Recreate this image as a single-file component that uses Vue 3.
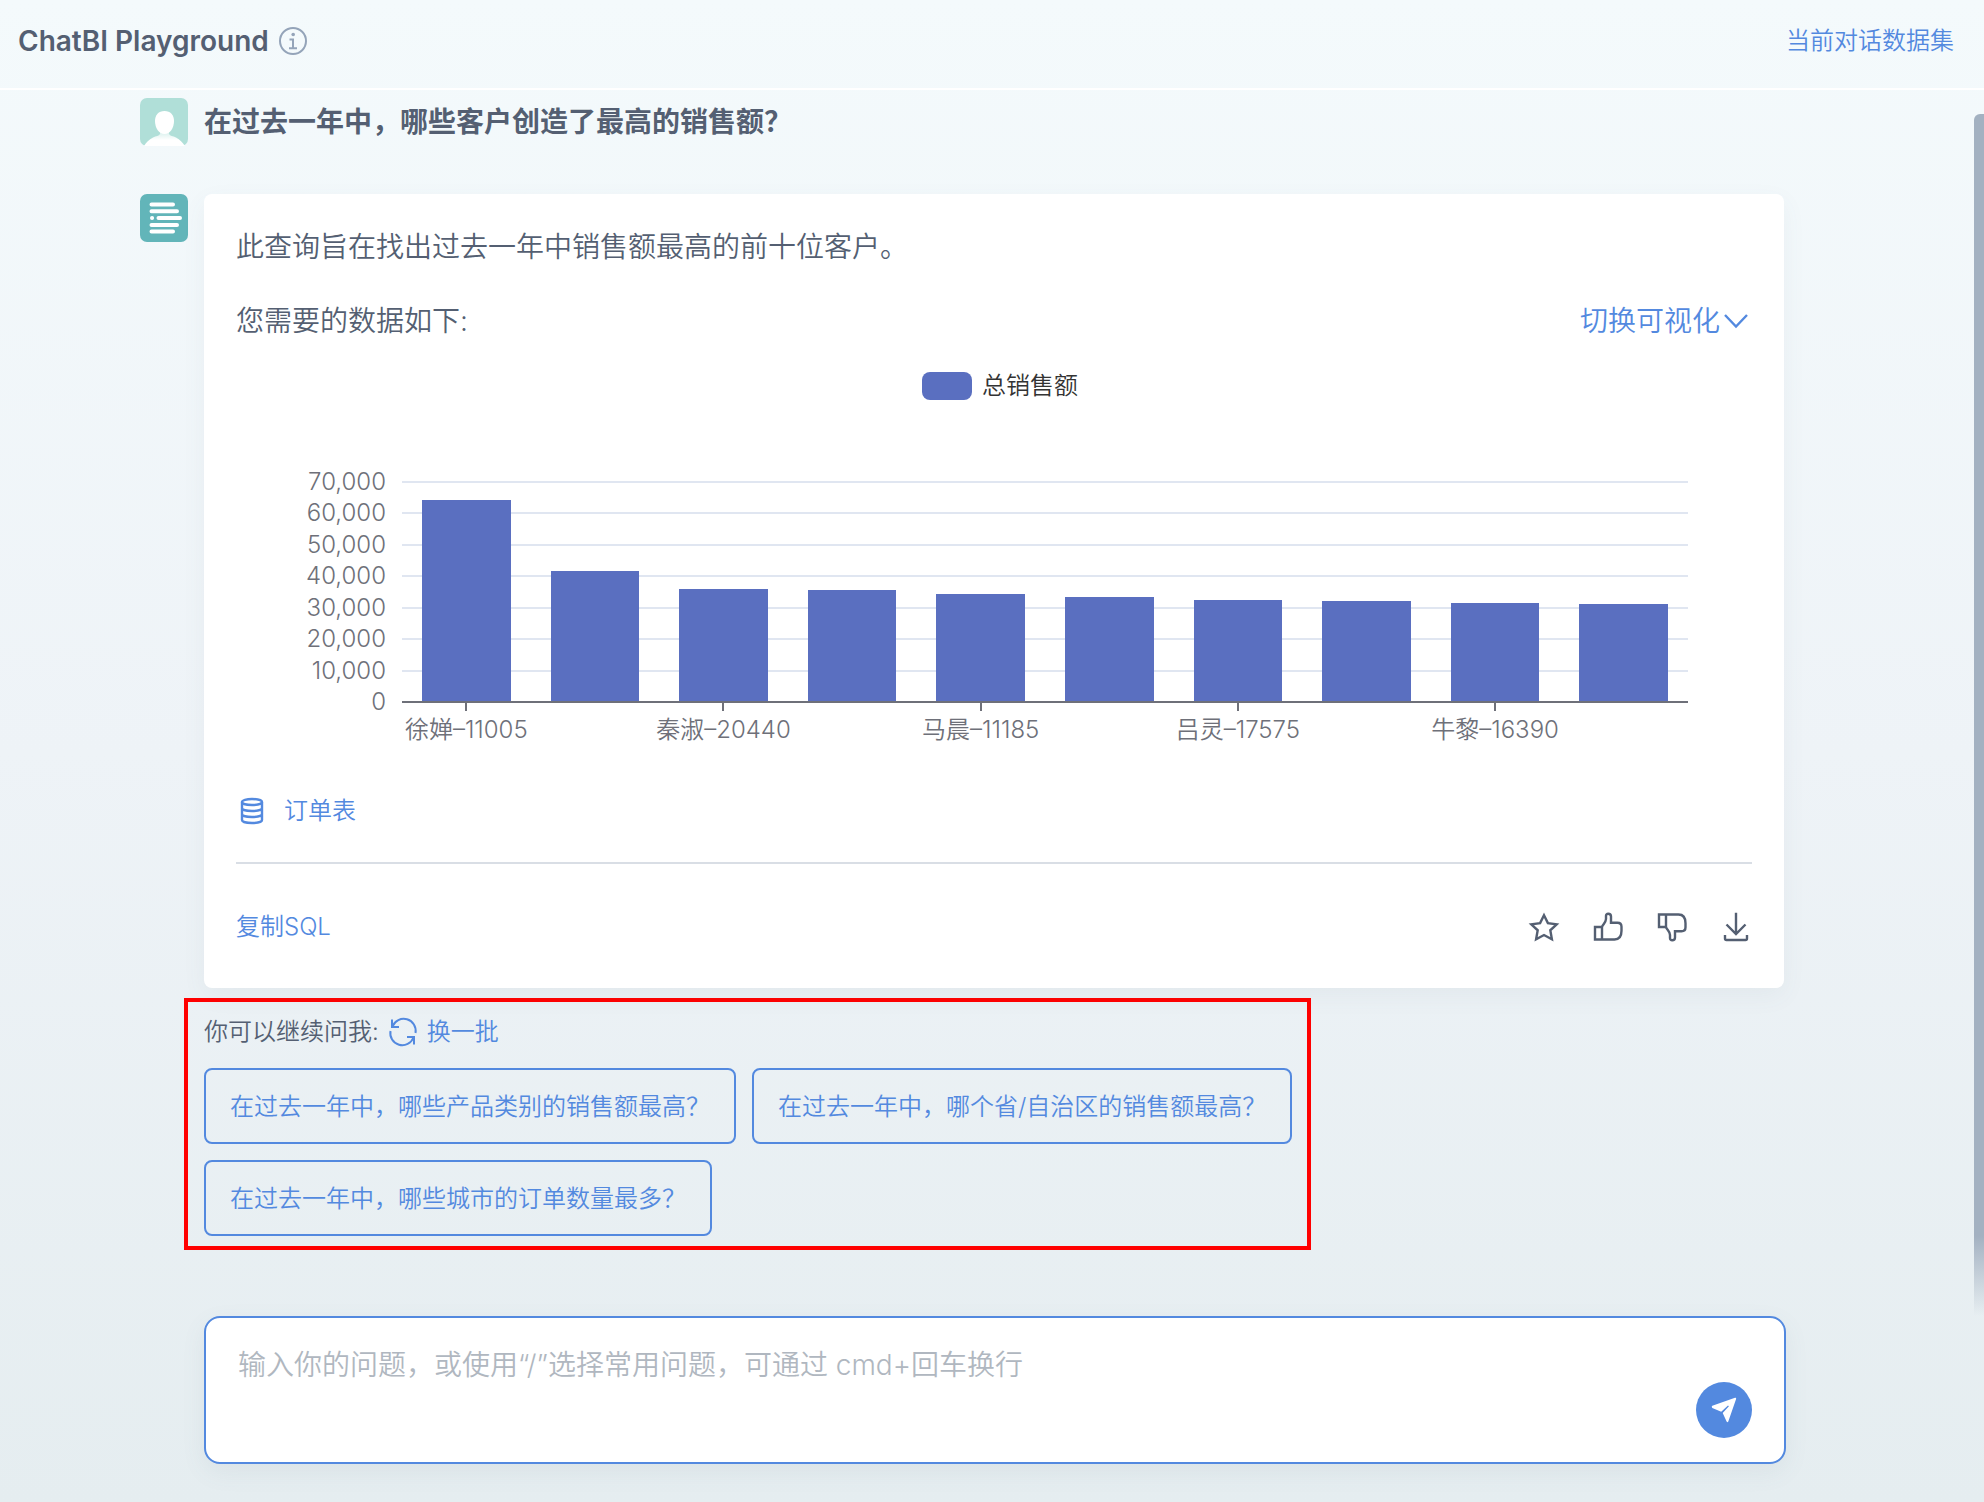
<script setup>
import { ref } from 'vue'

const question = ref('')
const axisMax = 70000
const axisTicks = ['70,000', '60,000', '50,000', '40,000', '30,000', '20,000', '10,000', '0']
const sales = [
  { name: '徐婵–11005', value: 64100 },
  { name: '', value: 41400 },
  { name: '秦淑–20440', value: 35700 },
  { name: '', value: 35200 },
  { name: '马晨–11185', value: 34000 },
  { name: '', value: 33100 },
  { name: '吕灵–17575', value: 32100 },
  { name: '', value: 31700 },
  { name: '牛黎–16390', value: 31100 },
  { name: '', value: 31000 },
]
const suggestions = [
  '在过去一年中，哪些产品类别的销售额最高？',
  '在过去一年中，哪个省/自治区的销售额最高？',
  '在过去一年中，哪些城市的订单数量最多？',
]
const barHeight = (value) => ({ height: (value / axisMax) * 100 + '%' })
</script>

<template>
  <div class="page" lang="zh-CN">
    <header class="header">
      <h1 class="title">ChatBI Playground</h1>
      <button class="icon-button info" type="button" aria-label="说明">
        <svg width="28" height="28" viewBox="0 0 28 28" fill="none" stroke="currentColor" stroke-width="2">
          <circle cx="14" cy="14" r="13" />
          <path d="M10.5 12.5H14V21M10 21.2h8" />
          <circle cx="14.2" cy="7.5" r="1.8" fill="currentColor" stroke="none" />
        </svg>
      </button>
      <a class="link dataset" href="#">当前对话数据集</a>
    </header>

    <main class="chat">
      <section class="message ask">
        <svg class="avatar" width="48" height="48" viewBox="0 0 48 48">
          <defs>
            <linearGradient id="shoulder" x1="0" y1="0" x2="0" y2="1">
              <stop offset="0" stop-color="#d3eeea" />
              <stop offset="0.6" stop-color="#fff" />
            </linearGradient>
          </defs>
          <rect width="48" height="48" rx="7" fill="#b0dfd8" />
          <path d="M20 33h9v3c1 2 4 2 7 3.500 4 2 6.500 5 9 8.500H4c2-3.500 5-6.500 9-8.500 3-1.500 6-1.500 7-3.500z" fill="url(#shoulder)" />
          <path d="M24.500 13c6 0 9.500 4 9.500 10 0 7-4 13-9.500 13S15 30 15 23c0-6 3.500-10 9.500-10z" fill="#fff" />
        </svg>
        <h2 class="question">在过去一年中，哪些客户创造了最高的销售额？</h2>
      </section>

      <section class="message">
        <svg class="avatar" width="48" height="48" viewBox="0 0 48 48">
          <rect width="48" height="48" rx="7" fill="#62b5b9" />
          <path d="M11.500 10.500H33M11.500 17.200H37M12 24h.1M18.500 24H40M11.500 31H37M11.500 37.500H33" stroke="#fff" stroke-width="4" stroke-linecap="round" />
        </svg>
        <article class="card">
          <p class="text">此查询旨在找出过去一年中销售额最高的前十位客户。</p>
          <div class="row data-row">
            <p class="text">您需要的数据如下:</p>
            <button class="link switch" type="button">
              切换可视化
              <svg width="32" height="32" viewBox="0 0 32 32" fill="none" stroke="currentColor" stroke-width="2.4">
                <path d="M5 10l11 11.500L27 10" />
              </svg>
            </button>
          </div>

          <figure class="chart">
            <figcaption class="legend"><span class="swatch"></span>总销售额</figcaption>
            <div class="chart-body">
              <ul class="y-axis">
                <li v-for="tick in axisTicks" :key="tick">{{ tick }}</li>
              </ul>
              <div class="plot-column">
                <div class="plot">
                  <div class="grid-lines">
                    <span v-for="tick in axisTicks" :key="tick" class="grid-line"></span>
                  </div>
                  <div v-for="(item, i) in sales" :key="i" class="band">
                    <div class="bar" :style="barHeight(item.value)"></div>
                  </div>
                </div>
                <div class="x-axis">
                  <div v-for="(item, i) in sales" :key="i" class="x-label" :class="{ ticked: item.name }">
                    {{ item.name }}
                  </div>
                </div>
              </div>
            </div>
          </figure>

          <a class="link source" href="#">
            <svg width="32" height="32" viewBox="0 0 32 32" fill="none" stroke="currentColor" stroke-width="2.400">
              <ellipse cx="16" cy="7" rx="10" ry="3" />
              <path d="M6 7v18c0 1.700 4.500 3 10 3s10-1.300 10-3V7M6 13c0 1.700 4.500 3 10 3s10-1.300 10-3M6 19c0 1.700 4.500 3 10 3s10-1.300 10-3" />
            </svg>
            订单表
          </a>
          <hr class="divider" />
          <div class="row">
            <button class="link" type="button">复制SQL</button>
            <div class="actions">
              <button class="icon-button" type="button" aria-label="收藏">
                <svg width="32" height="32" viewBox="0 0 32 32" fill="none" stroke="currentColor" stroke-width="2.400">
                  <path d="M16 4.200l3.900 7.900 8.800 1.200-6.400 6 1.600 8.900-7.900-4.200-7.900 4.200 1.600-8.900-6.400-6 8.800-1.200z" />
                </svg>
              </button>
              <button class="icon-button" type="button" aria-label="赞">
                <svg width="32" height="32" viewBox="0 0 32 32" fill="none" stroke="currentColor" stroke-width="2.400">
                  <path d="M10 16H3v12.500h7zM10 16c.5-2.500 3.800-4 4-8V5c0-1.500.8-2.200 2.200-2.200 1.800 0 2.800 1 2.800 2.700v6.300h6.500c2.500 0 4 1.500 4 4v4c0 6-2 8.700-7 8.700H10" />
                </svg>
              </button>
              <button class="icon-button" type="button" aria-label="踩">
                <svg width="32" height="32" viewBox="0 0 32 32" fill="none" stroke="currentColor" stroke-width="2.400">
                  <path transform="translate(0 32) scale(1 -1)" d="M10 16H3v12.500h7zM10 16c.5-2.500 3.800-4 4-8V5c0-1.500.8-2.200 2.200-2.200 1.800 0 2.800 1 2.800 2.700v6.300h6.500c2.500 0 4 1.500 4 4v4c0 6-2 8.700-7 8.700H10" />
                </svg>
              </button>
              <button class="icon-button" type="button" aria-label="下载">
                <svg width="32" height="32" viewBox="0 0 32 32" fill="none" stroke="currentColor" stroke-width="2.400">
                  <path d="M16 1.700V23M6.500 13.500L16 23l9.500-9.500M5 24v3.500q0 1.500 1.500 1.500h19q1.500 0 1.500-1.500V24" />
                </svg>
              </button>
            </div>
          </div>
        </article>
      </section>

      <section class="suggestions">
        <div class="suggest-head">
          <span>你可以继续问我:</span>
          <button class="link refresh" type="button">
            <svg width="32" height="32" viewBox="0 0 32 32" fill="none" stroke="currentColor" stroke-width="2">
              <path d="M5 3.500V11h7M5.500 10.500A12 12 0 0 1 28.500 17M27 28.500V21h-7M26.500 21.500A12 12 0 0 1 3.500 15" />
            </svg>
            换一批
          </button>
        </div>
        <div class="suggest-list">
          <button v-for="item in suggestions" :key="item" class="suggest" type="button">{{ item }}</button>
        </div>
      </section>
      <span class="scroll-thumb"></span>
    </main>

    <footer class="footer">
      <form class="composer" @submit.prevent>
        <textarea
          v-model="question"
          class="input"
          aria-label="输入你的问题"
          placeholder="输入你的问题，或使用“/”选择常用问题，可通过 cmd+回车换行"
        ></textarea>
        <button class="send" type="submit" aria-label="发送">
          <svg width="56" height="56" viewBox="0 0 56 56">
            <path d="M16.300 23.700L39 15.800q1.500-.3 1.100 1.200L32.300 39.500q-.7 1.300-1.700.1L26.700 31l6.200-6.700-.9-.9-6.800 6.300-8.900-3.800q-1.200-1.200 0-2.200z" fill="#fff" />
          </svg>
        </button>
      </form>
    </footer>
  </div>
</template>

<style>
body {
  margin: 0;
}
</style>

<style scoped>
.page {
  display: flex;
  flex-direction: column;
  box-sizing: border-box;
  min-height: 100vh;
  background: linear-gradient(#f4fafc, #eef3f7 50%, #e5edf0);
  color: #545f72;
  font-family: Inter, "Noto Sans CJK SC", sans-serif;
  font-size: 24px;
  font-weight: 350;
  line-height: 32px;
}
h1,
h2,
p,
ul,
figure {
  margin: 0;
  padding: 0;
}
button {
  padding: 0;
  border: 0;
  background: none;
  color: inherit;
  font: inherit;
  cursor: pointer;
}
svg {
  display: block;
  flex: none;
}
.link {
  color: #5389df;
  text-decoration: none;
}
.header {
  display: flex;
  align-items: center;
  gap: 10px;
  height: 82px;
  padding: 0 30px 6px 18px;
  border-bottom: 2px solid #fff;
}
.title {
  font-size: 28px;
  font-weight: 600;
  line-height: 40px;
}
.info {
  color: #94a4b9;
}
.dataset {
  margin-left: auto;
}
.chat {
  position: relative;
  flex: 1;
  padding: 8px 200px 66px 140px;
}
.message {
  display: flex;
  align-items: flex-start;
  gap: 16px;
}
.ask {
  margin-bottom: 48px;
}
.question {
  font-size: 28px;
  font-weight: 600;
  line-height: 48px;
}
.card {
  flex: 1;
  min-width: 0;
  padding: 33px 32px 45px;
  border-radius: 8px;
  background: #fff;
  box-shadow: 0 8px 24px rgba(84, 110, 122, 0.06);
}
.text {
  font-size: 28px;
  line-height: 40px;
}
.row {
  display: flex;
  align-items: center;
  justify-content: space-between;
}
.data-row {
  margin-top: 34px;
}
.switch {
  display: flex;
  align-items: center;
  font-size: 28px;
  line-height: 40px;
}
.chart {
  margin-top: 31px;
}
.legend {
  display: flex;
  align-items: center;
  justify-content: center;
  gap: 10px;
  height: 28px;
  padding-left: 12px;
  color: #333;
}
.swatch {
  width: 50px;
  height: 28px;
  border-radius: 8px;
  background: #5a6fc0;
}
.chart-body {
  display: flex;
  gap: 16px;
  margin-top: 81px;
  padding-right: 64px;
  color: #6e7079;
}
.y-axis {
  display: flex;
  flex-direction: column;
  justify-content: space-between;
  width: 150px;
  height: 248px;
  margin: -13px 0;
  line-height: 28px;
  list-style: none;
  text-align: right;
}
.plot-column {
  flex: 1;
}
.plot {
  position: relative;
  display: flex;
  align-items: flex-end;
  height: 220px;
  border-bottom: 2px solid #6e7079;
}
.grid-lines {
  position: absolute;
  inset: 0 0 -2px;
  display: flex;
  flex-direction: column;
  justify-content: space-between;
}
.grid-line {
  height: 2px;
  background: #e0e6f1;
}
.grid-line:last-child {
  background: #6e7079;
}
.band {
  position: relative;
  display: flex;
  flex: 1;
  align-items: flex-end;
  height: 100%;
  padding: 0 20px;
}
.bar {
  flex: 1;
  background: #5a6fc0;
}
.x-axis {
  display: flex;
}
.x-label {
  display: flex;
  flex: 1 1 0;
  flex-direction: column;
  align-items: center;
  width: 0;
  white-space: nowrap;
}
.ticked::before {
  width: 2px;
  height: 8px;
  margin-bottom: 3px;
  background: #6e7079;
  content: "";
}
.source {
  display: flex;
  align-items: center;
  gap: 16px;
  width: fit-content;
  margin-top: 49px;
}
.divider {
  height: 2px;
  margin: 35px 0 47px;
  border: 0;
  background: #d9dee5;
}
.actions {
  display: flex;
  gap: 32px;
}
.suggestions {
  box-sizing: border-box;
  max-width: 1127px;
  margin: 10px 0 0 44px;
  padding: 14px 14px 10px 16px;
  border: 4px solid #f00;
}
.suggest-head {
  display: flex;
  gap: 8px;
}
.refresh {
  display: flex;
  align-items: center;
  gap: 8px;
}
.suggest-list {
  display: flex;
  flex-wrap: wrap;
  gap: 16px;
  margin-top: 20px;
}
.suggest {
  height: 76px;
  padding: 1px 24px 0;
  border: 2px solid #5389df;
  border-radius: 8px;
  color: #5389df;
}
.scroll-thumb {
  position: absolute;
  top: 24px;
  right: 0;
  bottom: 0;
  width: 10px;
  border-radius: 6px 0 0 0;
  background: linear-gradient(#a3b1c1 calc(100% - 80px), rgba(163, 177, 193, 0));
}
.footer {
  padding: 0 198px 38px 204px;
}
.composer {
  display: flex;
  align-items: flex-end;
  box-sizing: border-box;
  height: 148px;
  padding: 24px 32px;
  border: 2px solid #5389df;
  border-radius: 16px;
  background: #fff;
  box-shadow: 0 8px 24px rgba(84, 110, 122, 0.08);
}
.input {
  flex: 1;
  align-self: stretch;
  padding: 3px 0 0;
  border: 0;
  outline: 0;
  background: none;
  color: inherit;
  font: inherit;
  font-size: 28px;
  line-height: 40px;
  resize: none;
}
.input::placeholder {
  color: #b0b7c0;
  opacity: 1;
}
.send {
  border-radius: 50%;
  background: #5389df;
}
</style>
